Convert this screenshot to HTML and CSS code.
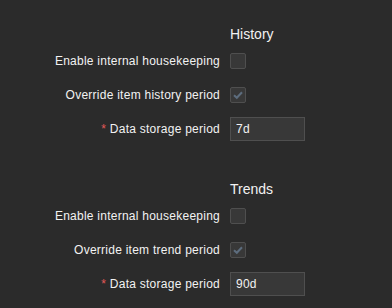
FILE: index.html
```html
<!DOCTYPE html>
<html lang="en">
<head>
<meta charset="UTF-8">
<title>Housekeeping</title>
<link rel="stylesheet" href="styles.css">
</head>
<body>
    <div class="form-list">
        <div class="section">
            <div class="row header">
                <div class="label"></div>
                <div class="field">History</div>
            </div>
            <div class="row">
                <label class="label">Enable internal housekeeping</label>
                <div class="field"><span class="checkbox"></span></div>
            </div>
            <div class="row">
                <label class="label">Override item history period</label>
                <div class="field">
                    <span class="checkbox checked">
                        <svg width="16" height="16" viewBox="0 0 16 16"><path d="M4 8.2 L6.8 10.8 L12 5.2" fill="none" stroke="#5d6d7e" stroke-width="2"/></svg>
                    </span>
                </div>
            </div>
            <div class="row">
                <label class="label"><span class="required">*</span> Data storage period</label>
                <div class="field"><input type="text" class="text-box" value="7d"></div>
            </div>
        </div>

        <div class="section">
            <div class="row header">
                <div class="label"></div>
                <div class="field">Trends</div>
            </div>
            <div class="row">
                <label class="label">Enable internal housekeeping</label>
                <div class="field"><span class="checkbox"></span></div>
            </div>
            <div class="row">
                <label class="label">Override item trend period</label>
                <div class="field">
                    <span class="checkbox checked">
                        <svg width="16" height="16" viewBox="0 0 16 16"><path d="M4 8.2 L6.8 10.8 L12 5.2" fill="none" stroke="#5d6d7e" stroke-width="2"/></svg>
                    </span>
                </div>
            </div>
            <div class="row">
                <label class="label"><span class="required">*</span> Data storage period</label>
                <div class="field"><input type="text" class="text-box" value="90d"></div>
            </div>
        </div>
    </div>
</body>
</html>
```

FILE: styles.css
```css
body {
    font-family: Arial, "Liberation Sans", sans-serif;
    font-size: 12px;
    color: #f2f2f2;
    background-color: #2b2b2b;
    margin: 0;
    padding: 0;
}

.form-list {
    padding-top: 22px;
}

.section {
    margin-bottom: 36px;
}

.section:last-child {
    margin-bottom: 0;
}

.row {
    display: grid;
    grid-template-columns: 220px 1fr;
    column-gap: 10px;
    align-items: center;
    min-height: 24px;
    margin-bottom: 10px;
}

.section .row:last-child {
    margin-bottom: 0;
}

.row.header {
    font-size: 14px;
    line-height: 24px;
    margin-bottom: 3px;
}

.label {
    text-align: right;
    letter-spacing: 0.25px;
}

.required {
    color: #e45959;
}

.checkbox {
    display: block;
    width: 14px;
    height: 14px;
    background-color: #383838;
    border: 1px solid #4f4f4f;
    border-radius: 2px;
    position: relative;
}

.checkbox svg {
    position: absolute;
    left: -1px;
    top: -1px;
}

.text-box {
    display: block;
    width: 75px;
    height: 24px;
    box-sizing: border-box;
    padding: 0 5px;
    margin: 0;
    font-family: Arial, "Liberation Sans", sans-serif;
    font-size: 12px;
    letter-spacing: 0.25px;
    color: #f2f2f2;
    background-color: #383838;
    border: 1px solid #4f4f4f;
    border-radius: 0;
    outline: none;
}
```
